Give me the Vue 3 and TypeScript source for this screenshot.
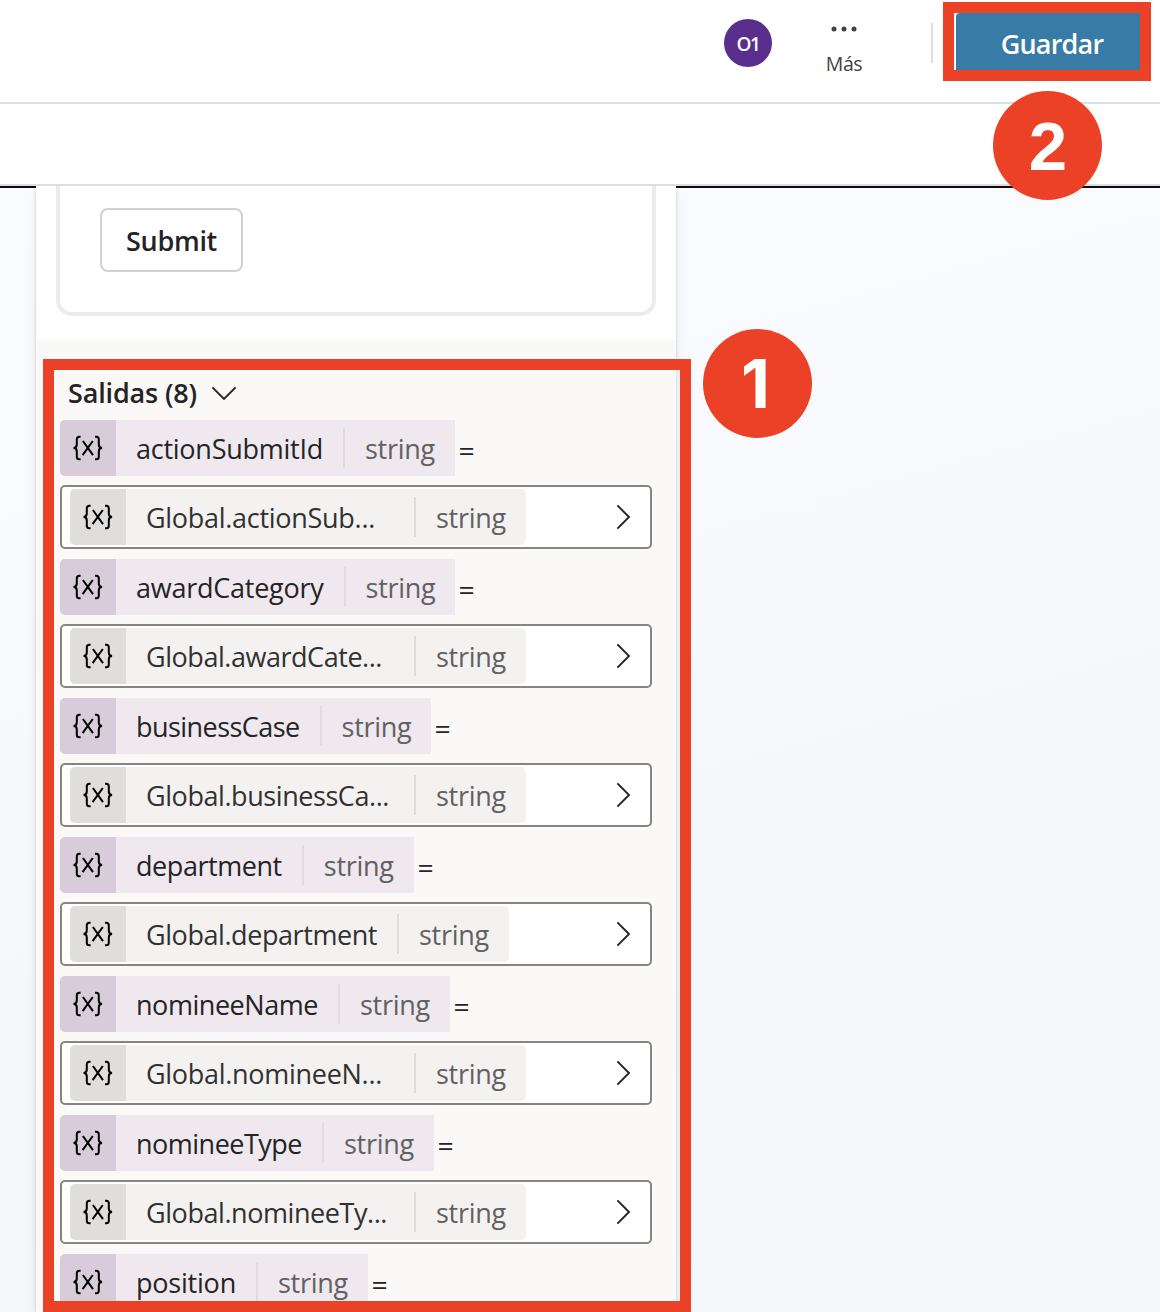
<script setup lang="ts">
import type { Directive } from 'vue'

interface Output {
  name: string
  width: number
  target: string
  targetWidth: number
}

const outputs: Output[] = [
  { name: 'actionSubmitId', width: 187, target: 'Global.actionSub...', targetWidth: 229 },
  { name: 'awardCategory', width: 187.6, target: 'Global.awardCate...', targetWidth: 236 },
  { name: 'businessCase', width: 163.6, target: 'Global.businessCa...', targetWidth: 243 },
  { name: 'department', width: 145.8, target: 'Global.department', targetWidth: 231 },
  { name: 'nomineeName', width: 182, target: 'Global.nomineeN...', targetWidth: 236 },
  { name: 'nomineeType', width: 166, target: 'Global.nomineeTy...', targetWidth: 241 },
  { name: 'position', width: 100, target: '', targetWidth: 0 },
]

// Adjusts tracking so that a label takes up exactly the given width.
const vFit: Directive<HTMLElement, number> = {
  mounted(el, binding) {
    const natural = el.getBoundingClientRect().width
    const count = (el.textContent ?? '').length
    if (count > 0) el.style.letterSpacing = `${(binding.value - natural) / count}px`
  },
}
</script>

<template>
  <div class="app">
    <svg class="defs" width="0" height="0" aria-hidden="true">
      <symbol id="variable" viewBox="0 0 32 28">
        <path d="M8.6 2.7H7.4Q4.8 2.7 4.8 5.3V10.6Q4.8 14 1.5 14Q4.8 14 4.8 17.4V22.7Q4.8 25.3 7.4 25.3H8.6M23 2.7H24.2Q26.8 2.7 26.8 5.3V10.6Q26.8 14 30.1 14Q26.8 14 26.8 17.4V22.7Q26.8 25.3 24.2 25.3H23M10.9 7L21 21.2M20.8 7L10.6 21.2" />
      </symbol>
    </svg>

    <header class="topbar">
      <div class="avatar"><span v-fit="23">O1</span></div>
      <div class="more">
        <svg width="28" height="8" viewBox="0 0 28 8"><circle cx="4" cy="4" r="2.5" /><circle cx="14" cy="4" r="2.5" /><circle cx="24" cy="4" r="2.5" /></svg>
        <span v-fit="36.4">Más</span>
      </div>
      <div class="separator"></div>
      <div class="save-frame">
        <button class="save"><span v-fit="102.5">Guardar</span></button>
      </div>
    </header>
    <div class="subbar"></div>

    <main class="canvas">
      <section class="panel">
        <div class="preview">
          <div class="card"><button class="submit"><span v-fit="91">Submit</span></button></div>
        </div>
        <div class="outputs">
          <h2><span v-fit="129">Salidas (8)</span>
            <svg width="26" height="15" viewBox="0 0 26 15"><path d="M1.4 1.4L13 13L24.6 1.4" /></svg>
          </h2>
          <div v-for="o in outputs" :key="o.name" class="output">
            <div class="line">
              <div class="chip purple">
                <div class="glyph"><svg width="32" height="28"><use href="#variable" /></svg></div>
                <div class="name"><span v-fit="o.width">{{ o.name }}</span></div>
                <i></i>
                <div class="type"><span v-fit="69.8">string</span></div>
              </div>
              <span class="equals">=</span>
            </div>
            <div v-if="o.target" class="field">
              <div class="chip">
                <div class="glyph"><svg width="32" height="28"><use href="#variable" /></svg></div>
                <div class="name" :class="{ cut: o.target.endsWith('...') }"><span v-fit="o.targetWidth">{{ o.target }}</span></div>
                <i></i>
                <div class="type"><span v-fit="69.8">string</span></div>
              </div>
              <svg class="next" width="15" height="26" viewBox="0 0 15 26"><path d="M1.4 1.4L13 13L1.4 24.6" /></svg>
            </div>
          </div>
        </div>
      </section>
    </main>

    <div class="outputs-frame"></div>
    <div class="step one"><span>1</span></div>
    <div class="step two"><span>2</span></div>
  </div>
</template>

<style>
body {
  margin: 0;
  overflow: hidden;
}
</style>

<style scoped>
.app {
  position: relative;
  width: 1160px;
  height: 1312px;
  overflow: hidden;
  display: flex;
  flex-direction: column;
  background: #fff;
  color: #242424;
  font: 27px/36px "Open Sans", "Noto Sans", sans-serif;
}
.app * {
  box-sizing: border-box;
}
span {
  white-space: nowrap;
}
svg {
  display: block;
  flex: none;
}
path {
  fill: none;
  stroke: currentColor;
  stroke-width: 1.9;
}
symbol path {
  stroke-width: 2;
}
.defs {
  position: absolute;
}
.topbar {
  height: 104px;
  flex: none;
  display: flex;
  align-items: flex-start;
  justify-content: flex-end;
  padding-right: 9px;
  border-bottom: 2px solid #dedede;
}
.avatar {
  width: 48px;
  height: 48px;
  margin-top: 19px;
  border-radius: 50%;
  display: flex;
  align-items: center;
  justify-content: center;
  background: #592e8c;
  color: #fff;
  font-size: 19px;
  font-weight: 550;
  line-height: 50px;
}
.avatar span {
  padding-top: 1px;
}
.more {
  width: 64px;
  margin: 25px 55px 0 40px;
  display: flex;
  flex-direction: column;
  align-items: center;
  color: #424242;
  font-size: 19.5px;
  line-height: 28px;
}
.more svg {
  fill: #424242;
  margin-bottom: 17px;
}
.separator {
  width: 2px;
  height: 40px;
  margin: 23px 10px 0 0;
  background: #dedede;
}
.save-frame {
  width: 208px;
  height: 79px;
  margin-top: 2px;
  border: 11px solid #eb4126;
  background: #fff;
  padding-left: 2px;
}
button {
  font: inherit;
  padding: 0;
  display: flex;
  align-items: center;
  justify-content: center;
}
.save {
  width: 100%;
  height: 100%;
  border: 0;
  border-radius: 4px 0 0 0;
  background: #387ba6;
  color: #fff;
  font-weight: 560;
  padding: 4px 0 0 8px;
}
.subbar {
  height: 82px;
  flex: none;
  border-bottom: 2px solid #dedede;
}
.canvas {
  flex: 1;
  min-height: 0;
  border-top: 2px solid #0b0d10;
  padding-left: 36px;
  background: linear-gradient(165deg, #fafbff 0%, #f9fafe 25%, #f3f7fa 70%, #f4f8fb 100%);
}
.panel {
  width: 640px;
  height: 1126px;
  margin-top: -2px;
  position: relative;
  display: flex;
  flex-direction: column;
  background: #faf9f8;
  box-shadow: 0 6px 12px rgba(0, 0, 0, 0.07), 0 0 3px rgba(0, 0, 0, 0.16);
  clip-path: inset(0 -16px 0 -16px);
}
.preview {
  height: 154px;
  flex: none;
  padding: 0 20px 24px;
  background: #fff;
}
.card {
  height: 130px;
  border: 4px solid #ebebea;
  border-top: 0;
  border-radius: 0 0 16px 16px;
  padding: 22px 40px;
}
.submit {
  width: 143px;
  height: 64px;
  border: 2px solid #d1d1d1;
  border-radius: 8px;
  background: #fff;
  color: #242424;
  font-weight: 570;
  padding-top: 2px;
}
.outputs {
  padding: 34px 24px 0;
}
h2 {
  margin: 0 0 9px;
  padding: 1px 0 0 8px;
  height: 37px;
  display: flex;
  align-items: center;
  gap: 14px;
  font-size: 27px;
  font-weight: 570;
}
.output {
  height: 139px;
}
.line {
  display: flex;
  margin-bottom: 9px;
}
.equals {
  margin-left: 4px;
  width: 16px;
  line-height: 56px;
  transform: translateY(3px) scaleX(1.05);
}
.chip {
  height: 56px;
  display: flex;
  align-items: center;
  border-radius: 5px;
  overflow: hidden;
  background: #f3f2f1;
  color: #323130;
}
.chip.purple {
  background: #efe8ee;
  color: #242424;
  border-radius: 5px 0 0 5px;
}
.glyph {
  width: 56px;
  height: 56px;
  display: flex;
  justify-content: center;
  padding-top: 14px;
  background: #dfdedd;
  color: #000;
}
.purple .glyph {
  background: #d8cbda;
}
.name,
.type {
  padding: 2px 20px 0;
}
.name.cut {
  width: 288px;
}
.chip i {
  width: 2px;
  height: 40px;
  background: #dedddc;
}
.type {
  color: #616161;
}
.field {
  width: 592px;
  height: 64px;
  display: flex;
  align-items: flex-start;
  justify-content: space-between;
  padding: 2px 19px 2px 8px;
  border: 2px solid #868584;
  border-radius: 5px;
  background: #fff;
}
.next {
  margin-top: 15px;
}
.outputs-frame {
  position: absolute;
  left: 43px;
  top: 359px;
  width: 648px;
  height: 953px;
  border: 11px solid #eb4126;
}
.step {
  position: absolute;
  width: 109px;
  height: 109px;
  border-radius: 50%;
  display: flex;
  align-items: center;
  justify-content: center;
  background: #eb4126;
  color: #fff;
  font: bold 69px/109px "Liberation Sans", Arial, sans-serif;
}
.one {
  left: 703px;
  top: 328.5px;
  padding-right: 4px;
  font-family: Inter, sans-serif;
  font-size: 67px;
}
.two {
  left: 993px;
  top: 91px;
  padding: 2px 0 0 1px;
}
</style>
